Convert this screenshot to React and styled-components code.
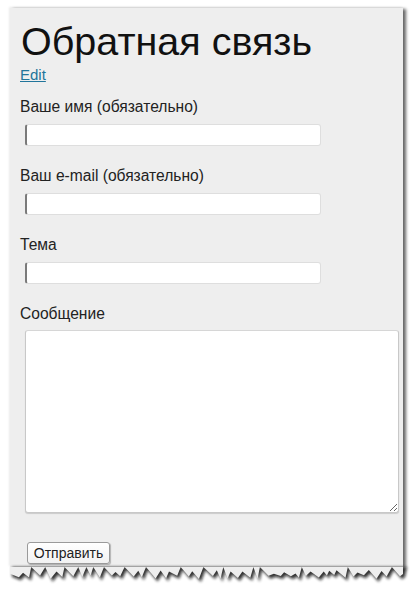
import * as React from 'react';
import styled, { createGlobalStyle } from 'styled-components';

const Global = createGlobalStyle`
  html, body {
    margin: 0;
    padding: 0;
    background: #ffffff;
  }
  body {
    font-family: "Liberation Sans", Arial, sans-serif;
  }
`;

const Sheet = styled.div`
  margin: 8px 0 0 10px;
  width: 393px;
`;

const Panel = styled.form`
  background: #eeeeee;
  padding: 10px 10px 3px 10px;
  box-shadow: 3px 1px 3px rgba(0, 0, 0, 0.6), -1px -1px 2px rgba(0, 0, 0, 0.08);
`;

const Title = styled.h1`
  margin: 0;
  font-size: 39.5px;
  line-height: 46px;
  font-weight: normal;
  color: #111;
  padding-left: 1px;
`;

const EditLink = styled.a`
  display: block;
  margin: 2px 0 14px;
  font-size: 15px;
  line-height: 18px;
  color: #21759b;
  text-decoration: underline;
  width: max-content;
`;

const Field = styled.div`
  margin-bottom: 21px;
`;

const Label = styled.label`
  display: block;
  font-size: 15.6px;
  line-height: 18px;
  color: #222;
`;

const TextInput = styled.input`
  display: block;
  box-sizing: border-box;
  margin: 8px 0 0 5px;
  width: 296px;
  height: 22px;
  background: #fff;
  border: 1px solid #dedede;
  border-left: 2px solid #7a7a7a;
  border-radius: 3px;
  padding: 0 4px;
  font-family: inherit;
  font-size: 14px;
  outline: none;
`;

const Message = styled.textarea`
  display: block;
  box-sizing: border-box;
  margin: 7px 0 0 5px;
  width: 374px;
  height: 183px;
  background: #fff;
  border: 1px solid #c8c8c8;
  border-top-color: #d6d6d6;
  border-radius: 3px;
  font-family: inherit;
  font-size: 14px;
  outline: none;
  box-shadow: 0 1px 1px rgba(0, 0, 0, 0.15);
`;

const Submit = styled.button`
  display: block;
  margin: 29px 0 0 7px;
  box-sizing: border-box;
  width: 83px;
  height: 22px;
  padding: 0 0 1px;
  border: 1px solid #9a9a9a;
  border-radius: 3px;
  background: linear-gradient(#ffffff, #f2f2f2);
  box-shadow: 1px 1px 1px rgba(0, 0, 0, 0.25);
  font-family: inherit;
  font-size: 14px;
  color: #222;
  cursor: pointer;
`;

const TornSvg = styled.svg`
  display: block;
  width: 399px;
  height: 20px;
  overflow: visible;
`;

// jagged bottom edge of the "torn" screenshot
const tornPoints = () => {
  const pts = [];
  let seed = 23;
  const rand = () => {
    seed = (seed * 9301 + 49297) % 233280;
    return seed / 233280;
  };
  let x = 0;
  let up = true;
  while (x < 393) {
    const big = rand() > 0.6;
    const y = up ? (big ? 0 : 3 + rand() * 4) : 8 + rand() * 4;
    pts.push(`${x.toFixed(1)},${y.toFixed(1)}`);
    x += up ? 3 + rand() * 7 : 2 + rand() * 4;
    up = !up;
  }
  pts.push('393,7');
  return pts;
};

const TornEdge = () => {
  const pts = tornPoints();
  const fill = `0,0 ${pts.join(' ')} 393,0`;
  const shadow = pts.map((p) => {
    const [x, y] = p.split(',').map(Number);
    return `${(x + 2).toFixed(1)},${(y + 3).toFixed(1)}`;
  });
  return (
    <TornSvg viewBox="0 0 399 20">
      <defs>
        <filter id="blur" x="-5%" y="-50%" width="110%" height="200%">
          <feGaussianBlur stdDeviation="1.4" />
        </filter>
      </defs>
      <polygon
        points={`2,0 ${shadow.join(' ')} 397,0`}
        fill="#111"
        opacity="0.85"
        filter="url(#blur)"
      />
      <polygon points={fill} fill="#eeeeee" />
    </TornSvg>
  );
};

const fields = [
  { id: 'name', label: 'Ваше имя (обязательно)' },
  { id: 'email', label: 'Ваш e-mail (обязательно)' },
  { id: 'subject', label: 'Тема' },
];

export default function App() {
  return (
    <>
      <Global />
      <Sheet>
        <Panel onSubmit={(e) => e.preventDefault()}>
          <Title>Обратная связь</Title>
          <EditLink href="#">Edit</EditLink>
          {fields.map((f) => (
            <Field key={f.id}>
              <Label htmlFor={f.id}>{f.label}</Label>
              <TextInput id={f.id} type="text" />
            </Field>
          ))}
          <Label htmlFor="message">Сообщение</Label>
          <Message id="message" />
          <Submit type="submit">Отправить</Submit>
        </Panel>
        <TornEdge />
      </Sheet>
    </>
  );
}
